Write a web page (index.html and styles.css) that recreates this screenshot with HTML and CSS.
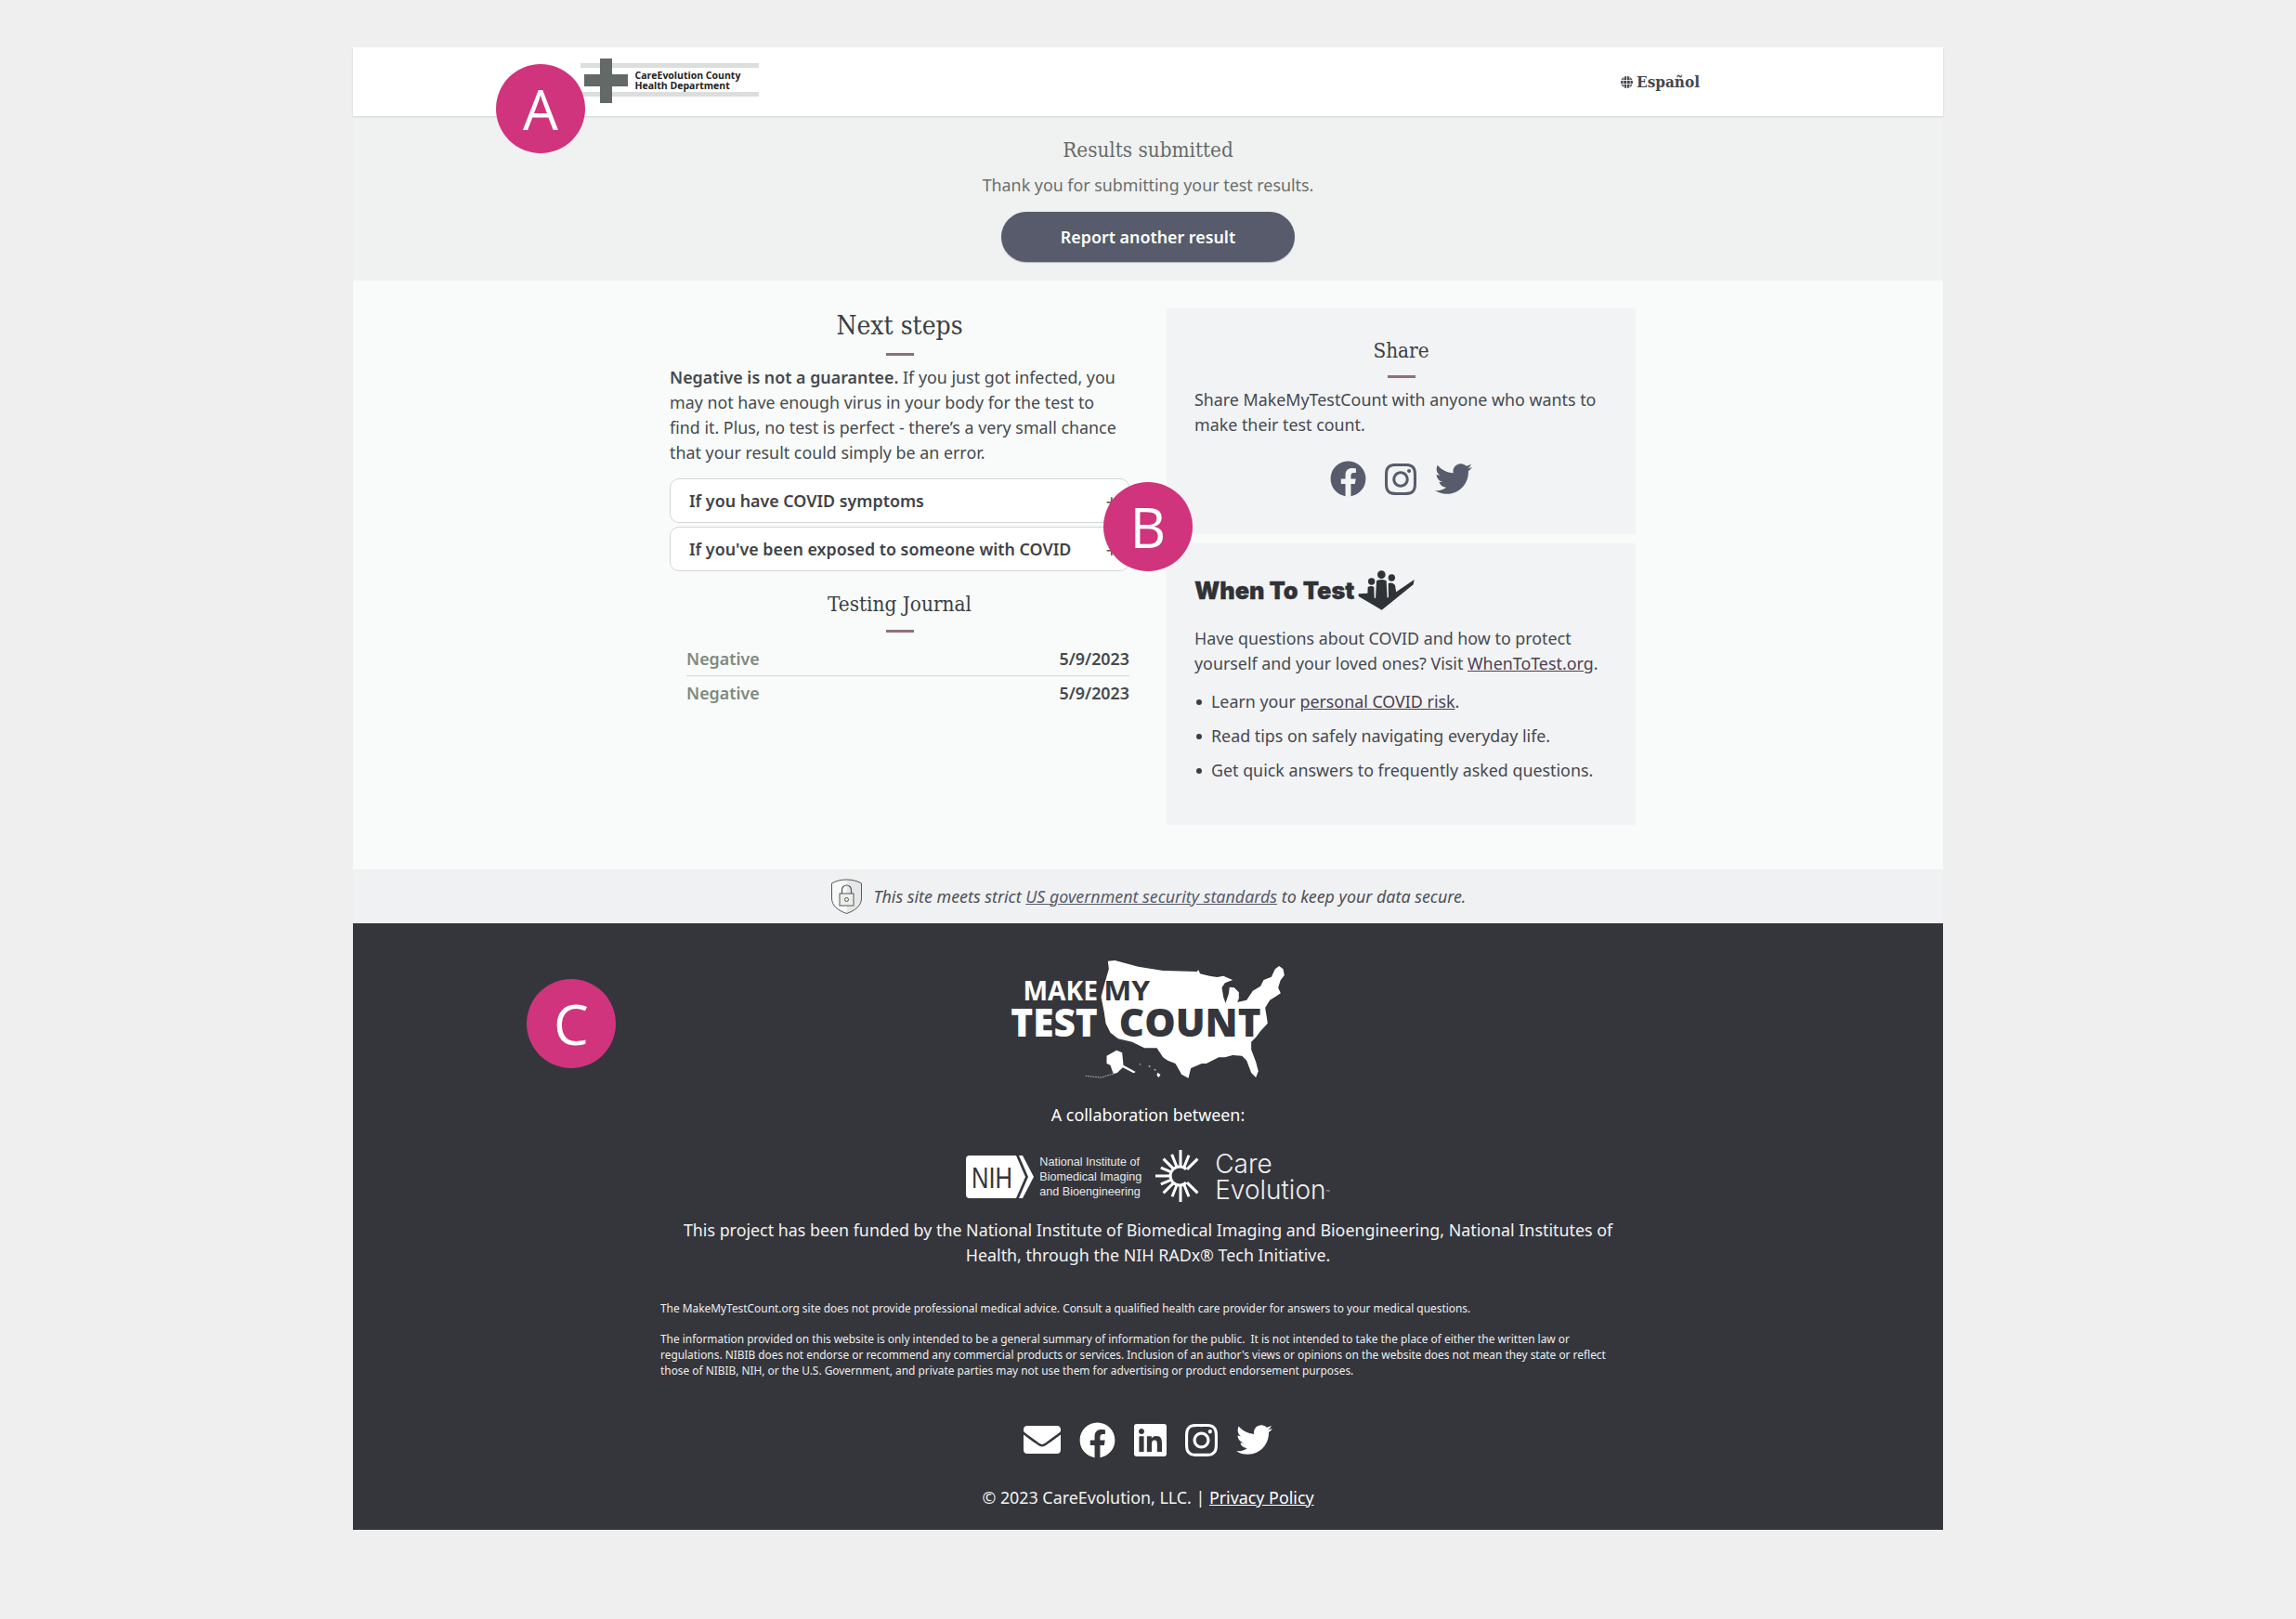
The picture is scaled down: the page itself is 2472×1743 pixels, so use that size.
FILE: index.html
```html
<!DOCTYPE html>
<html lang="en">
<head>
<meta charset="utf-8">
<title>Make My Test Count</title>
<link rel="stylesheet" href="styles.css">
</head>
<body>
<div class="frame">
  <header class="top">
    <svg class="hd-logo" width="192" height="48" viewBox="0 0 192 48">
      <rect x="0" y="5" width="192" height="5" fill="#dcdedd"/>
      <rect x="0" y="36" width="192" height="5" fill="#dcdedd"/>
      <rect x="21" y="0" width="13" height="48" fill="#636966"/>
      <rect x="4" y="17" width="47" height="13" fill="#636966"/>
      <text class="hd-logo-t" x="58.500" y="22">CareEvolution County</text>
      <text class="hd-logo-t" x="58.500" y="33">Health Department</text>
    </svg>
    <a class="lang">
      <svg width="13" height="13" viewBox="0 0 13 13"><circle cx="6.500" cy="6.500" r="6.500" fill="#43474e"/><path d="M0 4.500h13M0 8.500h13M6.500 0v13M3.800 1c-1.500 3-1.500 8 0 11M9.200 1c1.500 3 1.500 8 0 11" stroke="#fff" stroke-width=".8" fill="none"/></svg>
      <span>Español</span>
    </a>
  </header>

  <section class="band">
    <h2 class="band-title">Results submitted</h2>
    <p class="band-text">Thank you for submitting your test results.</p>
    <a class="btn">Report another result</a>
  </section>

  <main class="main">
    <div class="col-left">
      <h1 class="h-next">Next steps</h1>
      <div class="rule"></div>
      <p class="para para-main"><strong>Negative is not a guarantee.</strong> If you just got infected, you may not have enough virus in your body for the test to find it. Plus, no test is perfect - there’s a very small chance that your result could simply be an error.</p>
      <div class="acc-list">
        <div class="acc"><span>If you have COVID symptoms</span><span class="plus">+</span></div>
        <div class="acc"><span>If you've been exposed to someone with COVID</span><span class="plus">+</span></div>
      </div>
      <h2 class="h-sub">Testing Journal</h2>
      <div class="rule rule-sub"></div>
      <div class="journal">
        <div class="row row-line"><span class="neg">Negative</span><span class="date">5/9/2023</span></div>
        <div class="row"><span class="neg">Negative</span><span class="date">5/9/2023</span></div>
      </div>
    </div>
    <aside class="col-right">
      <section class="card card-share">
        <h2 class="h-share">Share</h2>
        <div class="rule rule-share"></div>
        <p class="para para-card">Share MakeMyTestCount with anyone who wants to make their test count.</p>
        <div class="share-icons">
          <svg class="ic-fb" viewBox="0 0 512 512"><path d="M504 256C504 119 393 8 256 8S8 119 8 256c0 123.78 90.69 226.38 209.25 245V327.69h-63V256h63v-54.64c0-62.15 37-96.48 93.67-96.48 27.14 0 55.52 4.84 55.52 4.84v61h-31.28c-30.8 0-40.41 19.12-40.41 38.73V256h68.78l-11 71.69h-57.78V501C413.31 482.38 504 379.78 504 256z"/></svg>
          <svg class="ic-ig" viewBox="0 32 448 448"><path d="M224.1 141c-63.6 0-114.9 51.3-114.9 114.9s51.3 114.9 114.9 114.9S339 319.5 339 255.9 287.7 141 224.1 141zm0 189.6c-41.1 0-74.7-33.5-74.7-74.7s33.5-74.7 74.7-74.7 74.7 33.5 74.7 74.7-33.6 74.7-74.7 74.7zm146.4-194.3c0 14.9-12 26.8-26.8 26.8-14.9 0-26.8-12-26.8-26.8s12-26.8 26.8-26.8 26.8 12 26.8 26.8zm76.1 27.2c-1.7-35.9-9.9-67.7-36.2-93.9-26.2-26.2-58-34.4-93.9-36.2-37-2.1-147.9-2.1-184.9 0-35.8 1.7-67.6 9.9-93.9 36.1s-34.4 58-36.2 93.9c-2.1 37-2.1 147.9 0 184.9 1.7 35.9 9.9 67.7 36.2 93.9s58 34.4 93.9 36.2c37 2.1 147.9 2.1 184.9 0 35.9-1.7 67.7-9.9 93.9-36.2 26.2-26.2 34.4-58 36.2-93.9 2.1-37 2.1-147.8 0-184.8zM398.8 388c-7.8 19.6-22.9 34.7-42.6 42.6-29.5 11.7-99.5 9-132.1 9s-102.7 2.6-132.1-9c-19.6-7.8-34.7-22.9-42.6-42.6-11.7-29.5-9-99.5-9-132.1s-2.6-102.7 9-132.1c7.8-19.6 22.9-34.7 42.6-42.6 29.5-11.7 99.5-9 132.1-9s102.7-2.6 132.1 9c19.6 7.8 34.7 22.9 42.6 42.6 11.7 29.5 9 99.5 9 132.1s2.7 102.7-9 132.1z"/></svg>
          <svg class="ic-tw" viewBox="0 48 512 416"><path d="M459.37 151.716c.325 4.548.325 9.097.325 13.645 0 138.72-105.583 298.558-298.558 298.558-59.452 0-114.68-17.219-161.137-47.106 8.447.974 16.568 1.299 25.34 1.299 49.055 0 94.213-16.568 130.274-44.832-46.132-.975-84.792-31.188-98.112-72.772 6.498.974 12.995 1.624 19.818 1.624 9.421 0 18.843-1.3 27.614-3.573-48.081-9.747-84.143-51.98-84.143-102.985v-1.299c13.969 7.797 30.214 12.67 47.431 13.319-28.264-18.843-46.781-51.005-46.781-87.391 0-19.492 5.197-37.36 14.294-52.954 51.655 63.675 129.3 105.258 216.365 109.807-1.624-7.797-2.599-15.918-2.599-24.04 0-57.828 46.782-104.934 104.934-104.934 30.213 0 57.502 12.67 76.67 33.137 23.715-4.548 46.456-13.32 66.599-25.34-7.798 24.366-24.366 44.833-46.132 57.827 21.117-2.273 41.584-8.122 60.426-16.243-14.292 20.791-32.161 39.308-52.628 54.253z"/></svg>
        </div>
      </section>
      <section class="card card-wtt">
        <svg class="wtt-logo" width="250" height="55" viewBox="0 0 750 165">
          <text class="wtt-t" x="18" y="105" textLength="517" lengthAdjust="spacingAndGlyphs">When To Test</text>
          <g fill="#2f3237">
            <circle cx="622" cy="26" r="13"/><circle cx="590" cy="48" r="11"/><circle cx="655" cy="36" r="11"/>
            <path d="M606 46q16-8 32 0l3 59-19 13-19-13z"/>
            <path d="M578 66q11-6 20 0l1 40-10-6-12-6z"/>
            <path d="M644 54q13-4 22 6l4 26-25 17z"/>
            <path d="M548 88l30-2 43 29 107-73-3 16-102 82-75-44z"/>
          </g>
        </svg>
        <p class="para para-wtt">Have questions about COVID and how to protect yourself and your loved ones? Visit <a class="link">WhenToTest.org</a>.</p>
        <ul class="bullets">
          <li>Learn your <a class="link">personal COVID risk</a>.</li>
          <li>Read tips on safely navigating everyday life.</li>
          <li>Get quick answers to frequently asked questions.</li>
        </ul>
      </section>
    </aside>
  </main>

  <div class="secure">
    <svg width="35" height="38" viewBox="0 0 35 38">
      <path d="M17.500 1C24 1 29 2.500 33.500 5v16c0 8-6.500 13-16 16.500C8 34 1.500 29 1.500 21V5C6 2.500 11 1 17.500 1z" fill="#f7f8f8"/>
      <path d="M17.500 1C24 1 29 2.500 33.500 5v16c0 8-6.500 13-16 16.500z" fill="#e6e7e8"/>
      <path d="M17.500 1C24 1 29 2.500 33.500 5v16c0 8-6.500 13-16 16.500C8 34 1.500 29 1.500 21V5C6 2.500 11 1 17.500 1z" fill="none" stroke="#55585c" stroke-width="1"/>
      <rect x="10" y="16" width="15" height="13" fill="#eeeee8" stroke="#55585c"/>
      <path d="M12.500 16v-4a5 5 0 0 1 10 0v4" fill="none" stroke="#55585c" stroke-width="1.200"/>
      <circle cx="17.500" cy="22.500" r="2" fill="none" stroke="#55585c"/>
    </svg>
    <p class="secure-t">This site meets strict <a class="link-sec">US government security standards</a> to keep your data secure.</p>
  </div>

  <footer class="foot">
    <svg class="foot-logo" width="305" height="135" viewBox="0 0 915 405">
      <path fill="#fff" d="M322 14L345 12 420 32 500 45 610 48 614 42 620 55 650 62 675 66 695 62 725 75 700 85 690 100 695 130 702 150 712 120 715 98 730 100 745 115 745 135 740 147 770 140 790 110 815 95 825 75 850 65 862 40 875 30 888 40 892 60 880 75 872 100 880 118 862 130 845 140 830 165 835 195 838 215 815 240 800 260 785 275 785 300 800 340 808 370 800 390 785 375 770 335 755 320 725 318 700 325 680 325 640 345 625 345 590 360 582 392 560 380 540 345 515 335 500 325 480 295 440 295 400 275 355 265 330 245 315 215 310 180 300 130 312 85 325 40z"/>
      <path fill="#fff" d="M318 320L350 302 368 310 372 350 412 372 405 376 370 358 352 375 340 378 335 365 330 350 318 345z"/>
      <path fill="none" stroke="#fff" stroke-width="2" stroke-dasharray="5 3" d="M340 378L300 390 250 385"/>
      <path fill="#fff" d="M423 346l6 1-2 3zM452 351l8 3-3 3zM470 362l8 3-3 3zM482 374l10 7-6 9-6-7z"/>
      <text class="lg-make" x="48" y="142" textLength="242" lengthAdjust="spacingAndGlyphs" fill="#fff">MAKE</text>
      <text class="lg-make" x="308" y="142" textLength="150" lengthAdjust="spacingAndGlyphs" fill="#35363c">MY</text>
      <text class="lg-test" x="8" y="258" textLength="281" lengthAdjust="spacingAndGlyphs" fill="#fff">TEST</text>
      <text class="lg-test" x="358" y="258" textLength="458" lengthAdjust="spacingAndGlyphs" fill="#35363c">COUNT</text>
    </svg>
    <p class="collab">A collaboration between:</p>
    <div class="partners">
      <div class="nih">
        <svg width="73" height="46" viewBox="0 0 73 46">
          <path fill="#fff" d="M4 0H54L64 23 54 46H4a4 4 0 0 1-4-4V4a4 4 0 0 1 4-4z"/>
          <path fill="#fff" d="M57 0H61L73 23 61 46H57L67 23z"/>
          <text class="nih-mark" x="6" y="35" textLength="44" lengthAdjust="spacingAndGlyphs" fill="#35363c">NIH</text>
        </svg>
        <div class="nih-t">National Institute of<br>Biomedical Imaging<br>and Bioengineering</div>
      </div>
      <div class="ce">
        <svg width="66" height="65" viewBox="0 0 66 65">
          <g stroke="#fff" stroke-width="3" fill="none">
            <path d="M39.100 24.900a10 10 0 1 0 0 14.200"/>
            <line x1="33" y1="22" x2="33" y2="4"/>
            <line x1="33" y1="22" x2="33" y2="8" transform="rotate(22 33 32)"/>
            <line x1="33" y1="22" x2="33" y2="6" transform="rotate(45 33 32)"/>
            <line x1="33" y1="22" x2="33" y2="7" transform="rotate(-22 33 32)"/>
            <line x1="33" y1="22" x2="33" y2="6" transform="rotate(-45 33 32)"/>
            <line x1="33" y1="22" x2="33" y2="9" transform="rotate(-67 33 32)"/>
            <line x1="33" y1="22" x2="33" y2="5" transform="rotate(-90 33 32)"/>
            <line x1="33" y1="22" x2="33" y2="9" transform="rotate(-113 33 32)"/>
            <line x1="33" y1="22" x2="33" y2="6" transform="rotate(-135 33 32)"/>
            <line x1="33" y1="22" x2="33" y2="8" transform="rotate(-158 33 32)"/>
            <line x1="33" y1="22" x2="33" y2="4" transform="rotate(180 33 32)"/>
            <line x1="33" y1="22" x2="33" y2="8" transform="rotate(158 33 32)"/>
            <line x1="33" y1="22" x2="33" y2="6" transform="rotate(135 33 32)"/>
          </g>
        </svg>
        <div class="ce-t">Care<br>Evolution<sup class="tm">™</sup></div>
      </div>
    </div>
    <p class="fund">This project has been funded by the National Institute of Biomedical Imaging and Bioengineering, National Institutes of Health, through the NIH RADx® Tech Initiative.</p>
    <div class="legal">
      <p>The MakeMyTestCount.org site does not provide professional medical advice. Consult a qualified health care provider for answers to your medical questions.</p>
      <p>The information provided on this website is only intended to be a general summary of information for the public.&nbsp; It is not intended to take the place of either the written law or regulations. NIBIB does not endorse or recommend any commercial products or services. Inclusion of an author's views or opinions on the website does not mean they state or reflect those of NIBIB, NIH, or the U.S. Government, and private parties may not use them for advertising or product endorsement purposes.</p>
    </div>
    <div class="foot-icons">
      <svg class="fi-mail" viewBox="0 64 512 384"><path d="M502.3 190.800c3.900-3.100 9.700-.2 9.700 4.700V400c0 26.500-21.500 48-48 48H48c-26.500 0-48-21.500-48-48V195.600c0-5 5.700-7.800 9.700-4.700 22.400 17.400 52.100 39.500 154.100 113.600 21.100 15.400 56.700 47.800 92.200 47.600 35.700.3 72-32.800 92.300-47.600 102-74.100 131.600-96.300 154-113.700zM256 320c23.200.4 56.600-29.200 73.400-41.400 132.700-96.300 142.800-104.700 173.400-128.700 5.800-4.500 9.200-11.500 9.200-18.900v-19c0-26.500-21.500-48-48-48H48C21.500 64 0 85.500 0 112v19c0 7.400 3.400 14.300 9.200 18.900 30.600 23.900 40.700 32.400 173.400 128.700 16.800 12.200 50.200 41.800 73.400 41.400z"/></svg>
      <svg class="fi-fb" viewBox="0 0 512 512"><path d="M504 256C504 119 393 8 256 8S8 119 8 256c0 123.78 90.69 226.38 209.25 245V327.69h-63V256h63v-54.64c0-62.15 37-96.48 93.67-96.48 27.14 0 55.52 4.84 55.52 4.84v61h-31.28c-30.8 0-40.41 19.12-40.41 38.73V256h68.78l-11 71.69h-57.78V501C413.31 482.38 504 379.78 504 256z"/></svg>
      <svg class="fi-in" viewBox="0 32 448 448"><path d="M416 32H31.900C14.300 32 0 46.500 0 64.300v383.400C0 465.500 14.300 480 31.900 480H416c17.600 0 32-14.500 32-32.300V64.300c0-17.800-14.400-32.300-32-32.300zM135.400 416H69V202.200h66.500V416zm-33.200-243c-21.300 0-38.500-17.300-38.500-38.500S80.900 96 102.200 96c21.200 0 38.500 17.300 38.500 38.500 0 21.300-17.200 38.500-38.500 38.500zm282.100 243h-66.400V312c0-24.800-.5-56.700-34.500-56.700-34.600 0-39.900 27-39.900 54.900V416h-66.400V202.200h63.700v29.200h.9c8.900-16.800 30.600-34.500 62.900-34.500 67.200 0 79.700 44.300 79.700 101.900V416z"/></svg>
      <svg class="fi-ig" viewBox="0 32 448 448"><path d="M224.1 141c-63.6 0-114.9 51.3-114.9 114.9s51.3 114.9 114.9 114.9S339 319.5 339 255.9 287.7 141 224.1 141zm0 189.6c-41.1 0-74.7-33.5-74.7-74.7s33.5-74.7 74.7-74.7 74.7 33.5 74.7 74.7-33.6 74.7-74.7 74.7zm146.4-194.3c0 14.9-12 26.8-26.8 26.8-14.9 0-26.8-12-26.8-26.8s12-26.8 26.8-26.8 26.8 12 26.8 26.8zm76.1 27.2c-1.7-35.9-9.9-67.7-36.2-93.9-26.2-26.2-58-34.4-93.9-36.2-37-2.1-147.9-2.1-184.9 0-35.8 1.7-67.6 9.9-93.9 36.1s-34.4 58-36.2 93.9c-2.1 37-2.1 147.9 0 184.9 1.7 35.9 9.9 67.7 36.2 93.9s58 34.4 93.9 36.2c37 2.1 147.9 2.1 184.9 0 35.9-1.7 67.7-9.9 93.9-36.2 26.2-26.2 34.4-58 36.2-93.9 2.1-37 2.1-147.8 0-184.8zM398.8 388c-7.8 19.6-22.9 34.7-42.6 42.6-29.5 11.7-99.5 9-132.1 9s-102.7 2.6-132.1-9c-19.6-7.8-34.7-22.9-42.6-42.6-11.7-29.5-9-99.5-9-132.1s-2.6-102.7 9-132.1c7.8-19.6 22.9-34.7 42.6-42.6 29.5-11.7 99.5-9 132.1-9s102.7-2.6 132.1 9c19.6 7.8 34.7 22.9 42.6 42.6 11.700 29.500 9 99.500 9 132.100s2.700 102.700-9 132.100z"/></svg>
      <svg class="fi-tw" viewBox="0 48 512 416"><path d="M459.37 151.716c.325 4.548.325 9.097.325 13.645 0 138.72-105.583 298.558-298.558 298.558-59.452 0-114.68-17.219-161.137-47.106 8.447.974 16.568 1.299 25.34 1.299 49.055 0 94.213-16.568 130.274-44.832-46.132-.975-84.792-31.188-98.112-72.772 6.498.974 12.995 1.624 19.818 1.624 9.421 0 18.843-1.3 27.614-3.573-48.081-9.747-84.143-51.98-84.143-102.985v-1.299c13.969 7.797 30.214 12.67 47.431 13.319-28.264-18.843-46.781-51.005-46.781-87.391 0-19.492 5.197-37.36 14.294-52.954 51.655 63.675 129.3 105.258 216.365 109.807-1.624-7.797-2.599-15.918-2.599-24.04 0-57.828 46.782-104.934 104.934-104.934 30.213 0 57.502 12.67 76.67 33.137 23.715-4.548 46.456-13.32 66.599-25.34-7.798 24.366-24.366 44.833-46.132 57.827 21.117-2.273 41.584-8.122 60.426-16.243-14.292 20.791-32.161 39.308-52.628 54.253z"/></svg>
    </div>
    <p class="copy">© 2023 CareEvolution, LLC. | <a class="link-foot">Privacy Policy</a></p>
  </footer>

  <div class="mark mark-a">A</div>
  <div class="mark mark-b">B</div>
  <div class="mark mark-c">C</div>
</div>
</body>
</html>
```

FILE: styles.css
```css
* { box-sizing: border-box; }
html, body { margin: 0; padding: 0; }
body {
  background: #efefef;
  font-family: "Noto Sans", sans-serif;
  font-size: 17.85px;
  line-height: 27px;
  color: #45494f;
  height: 1743px;
  padding-top: 51px;
}
h1, h2, p, ul { margin: 0; padding: 0; }
.frame { position: relative; width: 1712px; margin: 0 auto; }

.top {
  height: 74px;
  background: #fff;
  box-shadow: 0 1px 2px rgba(0,0,0,.12);
  position: relative;
  display: flex;
  align-items: center;
  justify-content: space-between;
  padding: 0 262px 0 245px;
}
.hd-logo { display: block; margin-top: -2px; }
.hd-logo-t { font-family: "Open Sans", sans-serif; font-weight: 700; font-size: 10.500px; fill: #222; }
.lang { display: flex; align-items: center; gap: 4px; font-family: "DejaVu Serif Condensed", "DejaVu Serif", serif; font-weight: 700; font-size: 17px; color: #43474e; }

.band { height: 177px; background: #f0f2f1; padding-top: 21px; text-align: center; }
.band-title { font-family: "DejaVu Serif Condensed", "DejaVu Serif", serif; font-weight: 400; font-size: 22.300px; line-height: 30px; color: #666b68; }
.band-text { margin-top: 10px; color: #6a6f6c; }
.btn {
  display: block;
  width: 316px; height: 54px;
  margin: 15px auto 0;
  border-radius: 27px;
  background: #575b6b;
  color: #fff;
  font-weight: 600;
  line-height: 54px;
  box-shadow: 0 1px 1px #b4b6c0;
}

.main {
  background: #f8fbf9;
  display: flex;
  gap: 40px;
  padding: 30px 0 48px 341px;
}
.col-left { width: 495px; }
.col-right { width: 505px; display: flex; flex-direction: column; gap: 10px; }
.h-next { font-family: "DejaVu Serif Condensed", "DejaVu Serif", serif; font-weight: 400; font-size: 28px; line-height: 38px; text-align: center; color: #3b3f45; }
.rule { width: 30px; height: 3px; background: #8f6f7a; margin: 12px auto 0; }
.h-next + .rule { margin-top: 10px; }
.para { margin-top: 10px; }
.para-main { max-width: 490px; }
.para strong { font-weight: 600; }
.acc-list { margin-top: 14px; display: flex; flex-direction: column; gap: 4px; }
.acc {
  height: 48px;
  border: 1px solid #d4d6d6;
  border-radius: 10px;
  background: #fff;
  display: flex;
  align-items: center;
  justify-content: space-between;
  padding: 0 12px 0 20px;
  font-weight: 600;
  color: #3f4349;
}
.plus { font-weight: 400; font-size: 22px; color: #555; }
.h-sub { margin-top: 20px; font-family: "DejaVu Serif Condensed", "DejaVu Serif", serif; font-weight: 400; font-size: 22.400px; line-height: 30px; text-align: center; color: #3b3f45; }
.rule-sub { margin-top: 13px; }
.journal { margin: 10px 0 0 18px; }
.row { height: 37px; display: flex; align-items: center; justify-content: space-between; font-weight: 600; }
.row-line { border-bottom: 1px solid #d3d6d5; }
.neg { color: #7e8a80; }
.date { color: #45494f; }

.card { background: #f2f3f4; padding: 30px 30px 0; }
.card-share { height: 243px; }
.card-wtt { height: 303px; padding-top: 25px; }
.h-share { font-family: "DejaVu Serif Condensed", "DejaVu Serif", serif; font-weight: 400; font-size: 22.300px; line-height: 30px; text-align: center; color: #3b3f45; }
.para-card { margin-top: 10px; }
.share-icons { margin-top: 25px; display: flex; justify-content: center; align-items: center; gap: 20px; fill: #575b6b; }
.ic-fb { width: 39px; height: 39px; display: block; }
.ic-ig { width: 34px; height: 34px; display: block; }
.ic-tw { width: 40px; height: 33px; display: block; }
.wtt-logo { display: block; margin-left: -6px; }
.wtt-t { font-family: Inter, sans-serif; font-weight: 900; font-size: 76px; fill: #2f3237; stroke: #2f3237; stroke-width: 1px; }
.para-wtt { margin-top: 9px; }
.link { color: #4c4050; text-decoration: underline; }
.bullets { margin-top: 14px; list-style: none; }
.bullets li { position: relative; padding-left: 18px; margin-bottom: 10px; }
.bullets li::before { content: ""; position: absolute; left: 2px; top: 11px; width: 6px; height: 6px; border-radius: 50%; background: #3b3f45; }

.secure { height: 58px; background: #f0f1f2; display: flex; align-items: center; justify-content: center; gap: 12px; }
.secure-t { font-style: italic; color: #4c5057; }
.link-sec { color: #575b6b; text-decoration: underline; }

.foot { background: #35363c; color: #fff; padding: 36px 0 20px; text-align: center; height: 653px; }
.foot-logo { display: block; margin: 0 auto; transform: translateX(1.500px); }
.collab { margin-top: 22px; }
.partners { margin-top: 20px; height: 65px; display: flex; justify-content: center; align-items: center; }
.nih { display: flex; align-items: center; gap: 6px; }
.nih svg { display: block; }
.nih-mark { font-family: "Liberation Sans", sans-serif; font-size: 32px; }
.nih-t { font-family: "Liberation Sans", sans-serif; font-size: 12.600px; line-height: 16px; text-align: left; color: #e8e8e8; white-space: nowrap; }
.ce { display: flex; align-items: center; margin-left: 9px; gap: 4px; }
.ce svg { display: block; }
.ce-t { font-family: Inter, sans-serif; font-weight: 300; font-size: 28px; line-height: 28px; text-align: left; color: #eee; white-space: nowrap; }
.tm { font-size: 7px; vertical-align: 4px; line-height: 0; }
.fund { margin: 12px auto 0; width: 1030px; color: #f2f2f2; }
.legal { margin: 35px 0 0 331px; width: 1034px; text-align: left; font-size: 11.900px; line-height: 17px; color: #eee; }
.legal p + p { margin-top: 16px; }
.foot-icons { margin-top: 47px; height: 38px; display: flex; justify-content: center; align-items: center; gap: 20px; fill: #fff; }
.foot-icons svg { display: block; }
.fi-mail { width: 40px; height: 30px; }
.fi-fb { width: 39px; height: 39px; }
.fi-in { width: 35px; height: 35px; }
.fi-ig { width: 35px; height: 35px; }
.fi-tw { width: 39px; height: 32px; }
.copy { margin-top: 30px; color: #f2f2f2; }
.link-foot { color: #fff; text-decoration: underline; }
.lg-make { font-family: "Open Sans", sans-serif; font-weight: 700; font-size: 88px; }
.lg-test { font-family: "Open Sans", sans-serif; font-weight: 800; font-size: 128px; }

.mark {
  position: absolute;
  width: 96px; height: 96px;
  border-radius: 50%;
  background: #d0347c;
  color: #fff;
  font-family: "Open Sans", sans-serif;
  font-weight: 400;
  font-size: 60px;
  line-height: 96px;
  text-align: center;
}
.mark-a { left: 154px; top: 18px; }
.mark-b { left: 808px; top: 468px; }
.mark-c { left: 187px; top: 1003px; }
```
